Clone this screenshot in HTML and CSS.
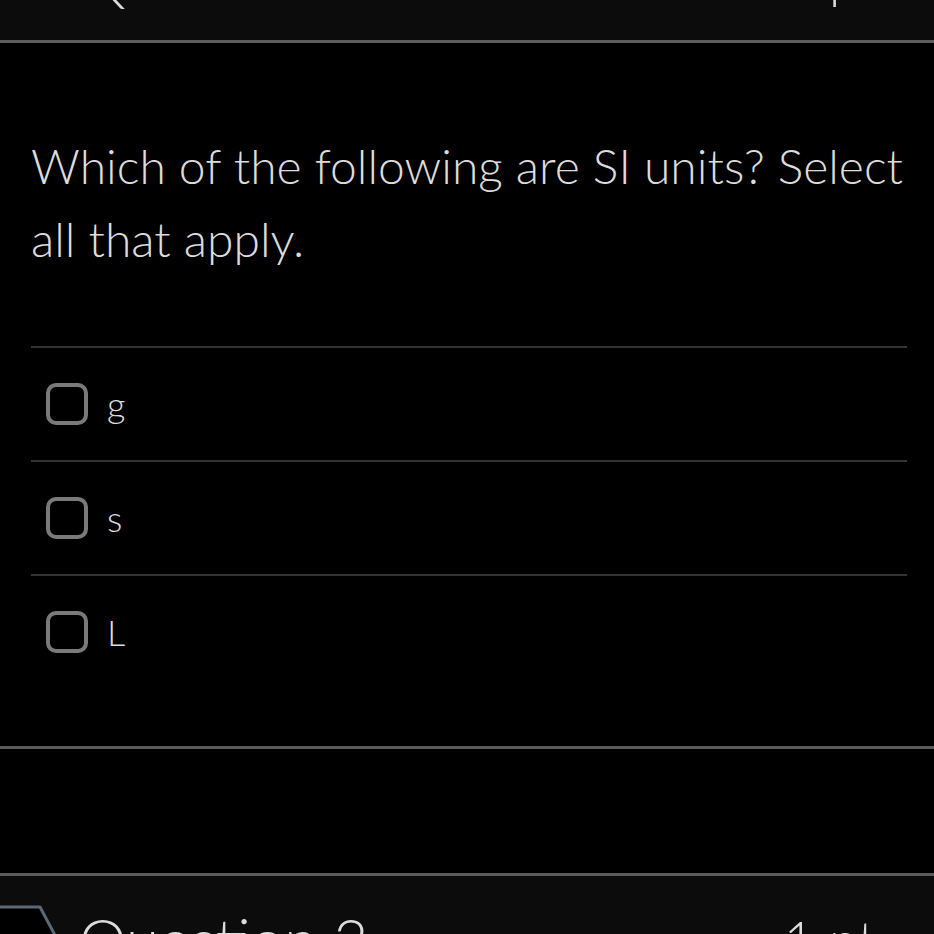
FILE: index.html
```html
<!DOCTYPE html>
<html lang="en">
<head>
<meta charset="utf-8">
<title>Quiz</title>
<link rel="stylesheet" href="styles.css">
</head>
<body>
<div class="page">
  <section class="question">
    <header class="qheader qheader-first">
      <svg class="flag" width="60" height="68" viewBox="0 0 60 68"><path d="M-10 2 H40 L57 34 L40 66 H-10 Z" fill="#000" stroke="#5a6878" stroke-width="3" stroke-linejoin="round"/></svg>
      <span class="qtitle">Question 1</span>
      <span class="qpts">1 pt</span>
    </header>
    <div class="qbody">
      <p class="qtext">Which of the following are SI units? Select all that apply.</p>
      <ul class="answers">
        <li class="answer"><span class="box"></span><span class="label">g</span></li>
        <li class="answer"><span class="box"></span><span class="label">s</span></li>
        <li class="answer"><span class="box"></span><span class="label">L</span></li>
      </ul>
    </div>
  </section>
  <section class="question">
    <header class="qheader">
      <svg class="flag" width="60" height="68" viewBox="0 0 60 68"><path d="M-10 2 H40 L57 34 L40 66 H-10 Z" fill="#000" stroke="#5a6878" stroke-width="3" stroke-linejoin="round"/></svg>
      <span class="qtitle">Question 2</span>
      <span class="qpts">1 pt</span>
    </header>
  </section>
</div>
</body>
</html>
```
FILE: styles.css
```css
html, body {
  margin: 0;
  padding: 0;
  background: #000;
  height: 100%;
  overflow: hidden;
}
body {
  font-family: "Lato Light", Lato, "Open Sans", sans-serif;
  font-weight: 300;
  color: #dcdcdc;
}
.page {
  margin-top: -86px;
}
.question {
  border-bottom: 3px solid #5c5c5c;
  margin-bottom: 124px;
}
.question + .question {
  border-top: 3px solid #5c5c5c;
}
.qheader {
  height: 126px;
  background: #0c0c0c;
  border-bottom: 3px solid #5c5c5c;
  display: flex;
  align-items: center;
  gap: 19px;
  padding-right: 58px;
}
.qheader-first .flag {
  visibility: hidden;
}
.question + .question .qheader {
  border-bottom: none;
}
.flag {
  flex: none;
  display: block;
}
.qtitle {
  flex: 1;
  font-size: 60px;
}
.qpts {
  font-size: 53px;
}
.qbody {
  padding: 86px 27px 58px 31px;
}
.qtext {
  margin: 0;
  font-size: 48px;
  line-height: 73px;
}
.answers {
  list-style: none;
  margin: 71px 0 0;
  padding: 0;
}
.answer {
  border-top: 2px solid #333;
  height: 112px;
  display: flex;
  align-items: center;
  padding-left: 15px;
  gap: 19px;
}
.box {
  width: 34px;
  height: 34px;
  border: 4px solid #7a7a7a;
  border-radius: 10px;
  flex: none;
}
.label {
  font-size: 36px;
  line-height: 1;
}
```
